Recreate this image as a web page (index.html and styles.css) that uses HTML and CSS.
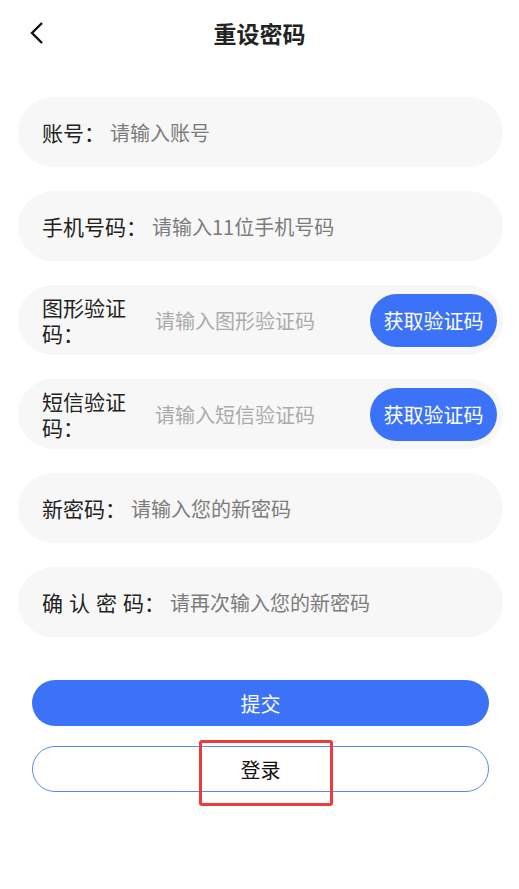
FILE: index.html
```html
<!DOCTYPE html>
<html lang="zh">

<head>
    <meta charset="UTF-8">
    <meta name="viewport" content="width=device-width, initial-scale=1.0">
    <title>重设密码</title>
    <link rel="stylesheet" href="styles.css">
</head>

<body>
    <div class="header">
        <a class="back" href="#">
            <svg width="14" height="24" viewBox="0 0 14 24">
                <path d="M12 2 L2 12 L12 22" fill="none" stroke="#111" stroke-width="2.4" />
            </svg>
        </a>
        <h1>重设密码</h1>
    </div>

    <div class="form">
        <div class="field">
            <span class="label">账号：</span>
            <input type="text" placeholder="请输入账号">
        </div>
        <div class="field">
            <span class="label">手机号码：</span>
            <input type="text" placeholder="请输入11位手机号码">
        </div>
        <div class="field">
            <span class="label label-wrap">图形验证码：</span>
            <input type="text" class="light" placeholder="请输入图形验证码">
            <button class="code-btn">获取验证码</button>
        </div>
        <div class="field">
            <span class="label label-wrap">短信验证码：</span>
            <input type="text" class="light" placeholder="请输入短信验证码">
            <button class="code-btn">获取验证码</button>
        </div>
        <div class="field">
            <span class="label">新密码：</span>
            <input type="password" placeholder="请输入您的新密码">
        </div>
        <div class="field">
            <span class="label"><span class="spread">确认密</span>码：</span>
            <input type="password" placeholder="请再次输入您的新密码">
        </div>
    </div>

    <div class="actions">
        <button class="submit">提交</button>
        <div class="login-wrap">
            <button class="login">登录</button>
            <div class="mark"></div>
        </div>
    </div>
</body>

</html>
```

FILE: styles.css
```css
body {
    font-family: 'Noto Sans CJK SC', 'Noto Sans', sans-serif;
    background-color: #ffffff;
    color: #222;
    margin: 0;
    padding: 0 0 80px;
}

.header {
    height: 70px;
    padding-bottom: 5px;
    box-sizing: border-box;
    display: flex;
    align-items: center;
    justify-content: center;
    position: relative;
}

.back {
    position: absolute;
    left: 30px;
    top: 21px;
    display: flex;
}

h1 {
    margin: 0;
    font-size: 23px;
    font-weight: bold;
    color: #222;
}

.form {
    margin: 27px 16px 0 18px;
}

.field {
    height: 70px;
    background-color: #f7f7f7;
    border-radius: 35px;
    padding: 0 6px 0 24px;
    margin-bottom: 24px;
    display: flex;
    align-items: center;
    box-sizing: border-box;
}

.label {
    font-size: 21px;
    color: #222;
    white-space: nowrap;
    margin-right: 5px;
}

.label-wrap {
    width: 88px;
    white-space: normal;
    line-height: 26px;
    margin-right: 25px;
}

.spread {
    letter-spacing: 6px;
}

input {
    flex: 1;
    min-width: 0;
    border: none;
    background: transparent;
    outline: none;
    padding: 0;
    font-family: inherit;
    font-size: 20px;
    color: #333;
}

input::placeholder {
    color: #7c7c7c;
}

input.light::placeholder {
    color: #ababab;
}

.code-btn {
    flex-shrink: 0;
    width: 127px;
    height: 53px;
    border: none;
    border-radius: 27px;
    background-color: #3b72f7;
    color: #ffffff;
    font-family: inherit;
    font-size: 20px;
    padding: 0;
}

.actions {
    margin: 43px 30px 0 32px;
}

.submit,
.login {
    width: 100%;
    height: 46px;
    border-radius: 23px;
    font-family: inherit;
    font-size: 20px;
    padding: 0;
    box-sizing: border-box;
    display: block;
}

.submit {
    background-color: #3b72f7;
    border: none;
    color: #ffffff;
}

.login-wrap {
    position: relative;
    margin-top: 20px;
}

.login {
    background-color: #ffffff;
    border: 1px solid #5a88e8;
    color: #111;
}

.mark {
    position: absolute;
    z-index: 1;
    left: 167px;
    top: -6px;
    width: 134px;
    height: 66px;
    border: 3px solid #ee3a3a;
    border-radius: 3px;
    box-sizing: border-box;
}
```
